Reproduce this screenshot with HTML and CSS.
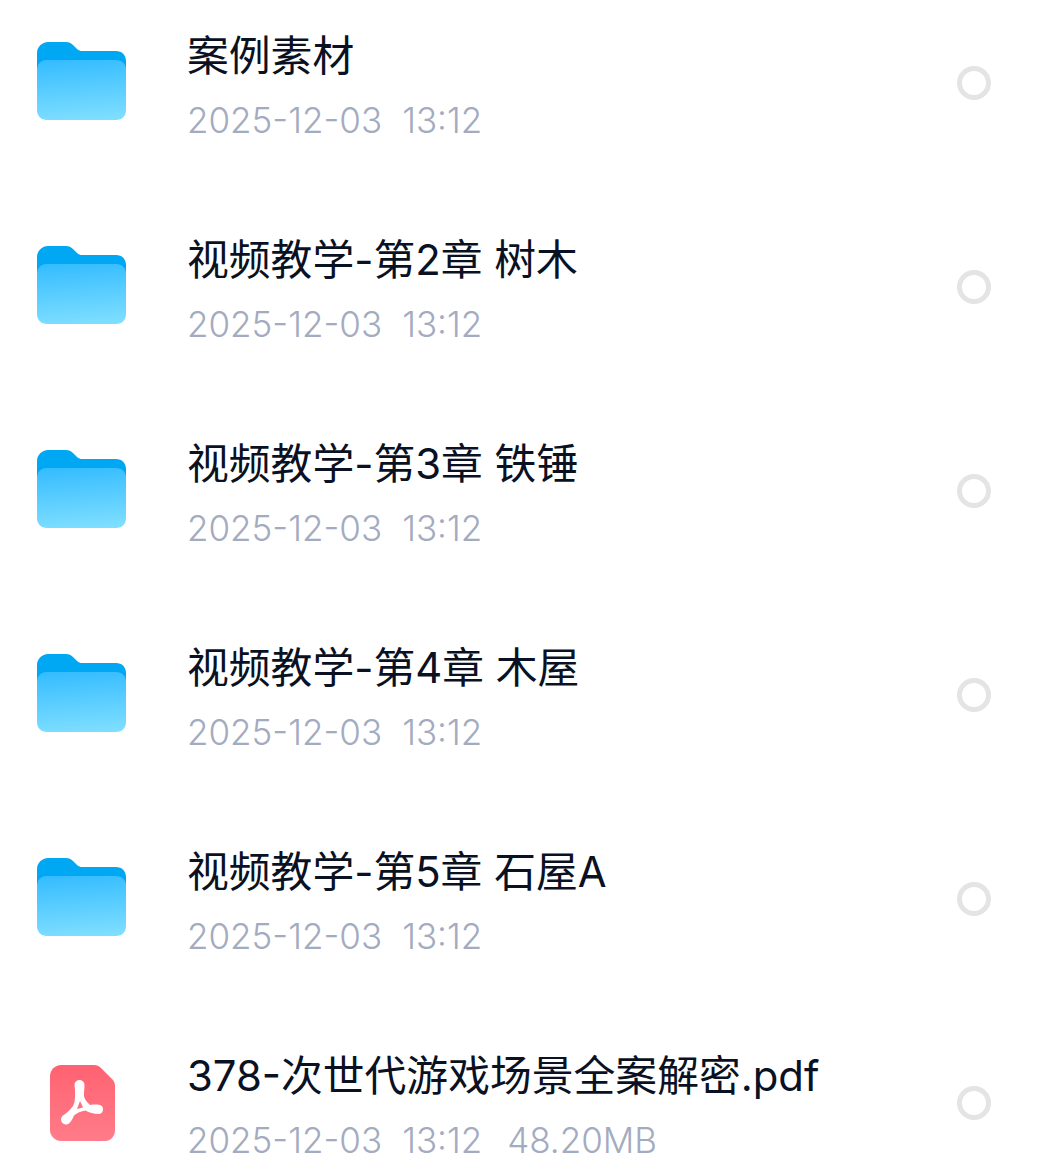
FILE: index.html
```html
<!DOCTYPE html>
<html lang="en">
<head>
    <meta charset="UTF-8">
    <meta name="viewport" content="width=device-width, initial-scale=1.0">
    <title>文件列表</title>
    <link rel="stylesheet" href="styles.css">
</head>
<body>
    <svg class="defs" width="0" height="0">
        <defs>
            <linearGradient id="folderFront" x1="0.45" y1="0" x2="0.55" y2="1">
                <stop offset="0" stop-color="#37bdff"/>
                <stop offset="1" stop-color="#7edeff"/>
            </linearGradient>
            <linearGradient id="pdfBody" x1="0" y1="0" x2="0" y2="1">
                <stop offset="0" stop-color="#ff6272"/>
                <stop offset="1" stop-color="#ff7c88"/>
            </linearGradient>
            <symbol id="folder" viewBox="0 0 89 78">
                <path fill="#00a8f3" d="M11 0H29C32 0 34 1 36 3L40 7C42 8.500 43 9 45 9H79C85 9 89 13 89 19V40H0V11C0 5 5 0 11 0Z"/>
                <path fill="url(#folderFront)" d="M10 18H79C85 18 89 22 89 28V68C89 74 85 78 79 78H10C4 78 0 74 0 68V28C0 22 4 18 10 18Z"/>
            </symbol>
        </defs>
    </svg>

    <ul class="file-list">
        <li class="file-row">
            <div class="file-icon"><svg class="folder-icon"><use href="#folder"/></svg></div>
            <div class="file-info">
                <div class="file-name">案例素材</div>
                <div class="file-meta"><span>2025-12-03</span><span>13:12</span></div>
            </div>
            <div class="radio"></div>
        </li>
        <li class="file-row">
            <div class="file-icon"><svg class="folder-icon"><use href="#folder"/></svg></div>
            <div class="file-info">
                <div class="file-name">视频教学-第2章 树木</div>
                <div class="file-meta"><span>2025-12-03</span><span>13:12</span></div>
            </div>
            <div class="radio"></div>
        </li>
        <li class="file-row">
            <div class="file-icon"><svg class="folder-icon"><use href="#folder"/></svg></div>
            <div class="file-info">
                <div class="file-name">视频教学-第3章 铁锤</div>
                <div class="file-meta"><span>2025-12-03</span><span>13:12</span></div>
            </div>
            <div class="radio"></div>
        </li>
        <li class="file-row">
            <div class="file-icon"><svg class="folder-icon"><use href="#folder"/></svg></div>
            <div class="file-info">
                <div class="file-name">视频教学-第4章 木屋</div>
                <div class="file-meta"><span>2025-12-03</span><span>13:12</span></div>
            </div>
            <div class="radio"></div>
        </li>
        <li class="file-row">
            <div class="file-icon"><svg class="folder-icon"><use href="#folder"/></svg></div>
            <div class="file-info">
                <div class="file-name">视频教学-第5章 石屋A</div>
                <div class="file-meta"><span>2025-12-03</span><span>13:12</span></div>
            </div>
            <div class="radio"></div>
        </li>
        <li class="file-row">
            <div class="file-icon">
                <svg class="pdf-icon" viewBox="0 0 65 76">
                    <path fill="url(#pdfBody)" d="M11 0H44C47 0 49 1 51 3L62 14C64 16 65 18 65 21V65C65 71 61 76 55 76H11C5 76 0 71 0 65V11C0 5 5 0 11 0Z"/>
                    <path fill="#fff" fill-rule="evenodd" d="M24.500 20A5 5 0 0 1 34.500 20C34.500 26 33 30 35 34C36 36 38 38 40 40C43 39.500 46 39.500 49 39.700A4.700 4.700 0 0 1 49 49C44 49 39 47.500 35.500 45.500C31 46 27 48 24 50.500C22.500 54 21 57 19 58.500A5 5 0 1 1 13 50.500C17 48 20 45 23 41C25.500 37 25.500 27 24.500 20ZM30 36L33 42.500L27 44Z"/>
                </svg>
            </div>
            <div class="file-info">
                <div class="file-name">378-次世代游戏场景全案解密.pdf</div>
                <div class="file-meta"><span>2025-12-03</span><span>13:12</span><span class="file-size">48.20MB</span></div>
            </div>
            <div class="radio"></div>
        </li>
    </ul>
</body>
</html>
```

FILE: styles.css
```css
html, body {
    margin: 0;
    height: 1176px;
    overflow: hidden;
    background-color: #fff;
}
.defs {
    position: absolute;
}
.file-list {
    list-style: none;
    margin: -19px 0 0 0;
    padding: 0;
}
.file-row {
    display: flex;
    align-items: flex-start;
    height: 204px;
    padding: 0 66px 0 37px;
    box-sizing: border-box;
}
.file-icon {
    flex: none;
    display: flex;
    justify-content: center;
    width: 89px;
    margin-top: 61px;
    margin-right: 61px;
}
.folder-icon {
    display: block;
    width: 89px;
    height: 78px;
}
.pdf-icon {
    display: block;
    width: 65px;
    height: 76px;
    margin-top: 3px;
    margin-left: 1px;
}
.file-info {
    flex: 1;
    min-width: 0;
    padding-top: 46px;
}
.file-name {
    font-family: Inter, "Noto Sans CJK SC", sans-serif;
    font-size: 41.8px;
    line-height: 58px;
    color: #0a1122;
    white-space: nowrap;
}
.file-meta {
    display: flex;
    gap: 20px;
    margin-top: 6px;
    font-family: Inter, "Noto Sans", sans-serif;
    font-size: 35px;
    font-weight: 300;
    line-height: 58px;
    color: #a3abc0;
    white-space: nowrap;
}
.file-size {
    margin-left: 5px;
}
.radio {
    flex: none;
    width: 34px;
    height: 34px;
    margin-top: 85px;
    border: 5px solid #e4e4e4;
    border-radius: 50%;
    box-sizing: border-box;
}
```
